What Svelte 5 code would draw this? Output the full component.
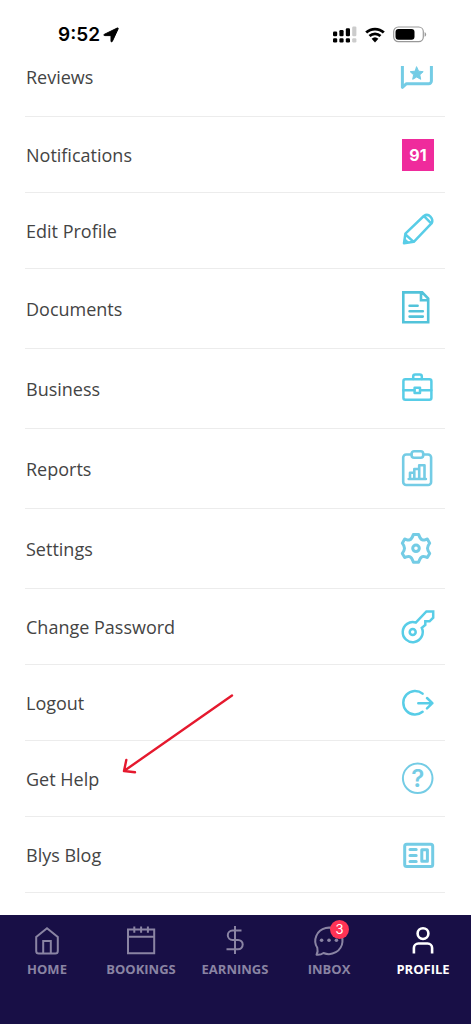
<script lang="ts">
  interface MenuItem {
    label: string;
    icon: string;
    tall?: boolean;
  }

  const items: MenuItem[] = [
    { label: 'Reviews', icon: 'reviews', tall: true },
    { label: 'Notifications', icon: 'count' },
    { label: 'Edit Profile', icon: 'pencil' },
    { label: 'Documents', icon: 'document', tall: true },
    { label: 'Business', icon: 'briefcase', tall: true },
    { label: 'Reports', icon: 'report', tall: true },
    { label: 'Settings', icon: 'gear', tall: true },
    { label: 'Change Password', icon: 'key' },
    { label: 'Logout', icon: 'logout' },
    { label: 'Get Help', icon: 'help' },
    { label: 'Blys Blog', icon: 'blog' }
  ];

  const tabs = ['Home', 'Bookings', 'Earnings', 'Inbox', 'Profile'];

  let activeTab = $state('Profile');
  let notifications = 91;
  let unread = 3;
</script>

<div class="app">
  <!-- Status bar -->
  <header class="status">
    <div class="clock">
      <span>9:52</span>
      <svg width="16" height="16" viewBox="0 0 16 16"><path d="M1.2 7.4 14.3 1q1.2-.4.8.9L9.3 14.4q-.9 1.2-1.3-.2V8.6H1.8Q0 8.2 1.2 7.4z" stroke="#000" /></svg>
    </div>
    <div class="signals">
      <svg width="24" height="17" viewBox="0 0 24 17">
        <rect x="0" y="5.5" width="4.2" height="4.7" rx="1.2" />
        <rect x="6.4" y="4" width="4.2" height="6.2" rx="1.2" />
        <rect x="12.8" y="2.2" width="4.2" height="8" rx="1.2" />
        <rect x="19.2" y="0.5" width="4.2" height="9.7" rx="1.2" fill="#ccc" />
        <rect x="0" y="12.2" width="4.2" height="4.2" rx="1.2" />
        <rect x="6.4" y="12.2" width="4.2" height="4.2" rx="1.2" />
        <rect x="12.8" y="12.2" width="4.2" height="4.2" rx="1.2" />
        <rect x="19.2" y="12.2" width="4.2" height="4.2" rx="1.2" fill="#ccc" />
      </svg>
      <svg width="20" height="16" viewBox="0 0 20 16">
        <path d="M1.2 5.6a12.7 12.7 0 0 1 17.6 0M4.5 9.1a8 8 0 0 1 11 0" fill="none" stroke="#000" stroke-width="2.8" />
        <path d="M6.6 11.8a5 5 0 0 1 6.8 0L10 15.4z" />
      </svg>
      <svg width="34" height="17" viewBox="0 0 34 17">
        <rect x="0.7" y="1" width="29.6" height="14.6" rx="4.6" fill="none" stroke="#999" stroke-width="1.2" />
        <rect x="2.5" y="2.9" width="19" height="10.8" rx="3" />
        <path d="M31.6 6v4.8q1.5-.7 1.5-2.4T31.6 6z" fill="#999" />
      </svg>
    </div>
  </header>

  <main class="content">
    <ul class="menu">
      {#each items as item (item.label)}
        <li class="row" class:tall={item.tall}>
          <a href="#{item.icon}">
            <span>{item.label}</span>
            {#if item.icon === 'count'}
              <span class="count">{notifications}</span>
            {:else}
              <svg class="icon {item.icon}" viewBox="0 0 36 39">
                {#if item.icon === 'reviews'}
                  <path d="M2.4 30.3V6a2.5 2.5 0 0 1 2.5-2.5h24A2.5 2.5 0 0 1 31.4 6v18a2.7 2.7 0 0 1-2.7 2.7H6.5z" />
                  <path class="solid" d="m16.7 10 1.9 4.2 4.6.5-3.4 3.1.9 4.5-4-2.3-4 2.3.9-4.5-3.4-3.1 4.6-.5z" />
                {:else if item.icon === 'pencil'}
                  <path d="M4 32.2 5.4 22.6 23.8 5q3.6-2.6 6.6.6t1.3 6.6L13.8 30.8zM24 5.2l7.4 7.4M5.2 23.2l8.2 7.4M4.7 28.6l3.3 3" />
                {:else if item.icon === 'document'}
                  <path d="M3.3 3.4h18.9l6 6.2v23.6H3.3zM21 4v7.2h7M9.6 16.7h8M9.6 22.2h13.2M9.6 27.6h13.2" />
                {:else if item.icon === 'briefcase'}
                  <rect x="3.4" y="10.2" width="28" height="20.6" rx="2" />
                  <path d="M13.2 10V7.6a2 2 0 0 1 2-2h4.6a2 2 0 0 1 2 2V10M3.4 21.3h10.9M20.3 21.3h11" />
                  <rect x="14.6" y="18.7" width="5.4" height="5.2" />
                {:else if item.icon === 'report'}
                  <path d="M11.4 5.5H6.2a3 3 0 0 0-3 3V33a3 3 0 0 0 3 3h21.9a3 3 0 0 0 3-3V8.5a3 3 0 0 0-3-3h-4.7" />
                  <rect x="11.6" y="2.2" width="11.6" height="6.5" rx="2.5" />
                  <path d="M8.7 30h17.2M10 30v-6.2h4.3M14.3 30V20h4.9M19.2 30V16.2h5.3V30" />
                {:else if item.icon === 'gear'}
                  <path d="M13.4 5.4h5.2c1 2.6 1.5 4.7 3.7 5.5s3.2-.5 5-.8l2.4 4.1c-1.4 1.8-2.2 3-2.2 5.1s.8 3.3 2.2 5.1l-2.4 4.1c-1.8-.3-2.8-1.6-5-.8s-2.7 2.9-3.7 5.5h-5.2c-1-2.6-1.5-4.7-3.7-5.5s-3.2.5-5 .8l-2.400-4.100c1.400-1.800 2.200-3 2.200-5.100s-.8-3.300-2.200-5.100l2.400-4.100c1.800.3 2.800 1.600 5 .8s2.700-2.900 3.700-5.500z" />
                  <circle cx="16" cy="19.3" r="3.3" />
                {:else if item.icon === 'key'}
                  <path d="M15.8 15.6 26.4 4.4h6.8v6.3l-3.6 3.6h-4.3v3.6l-3.500 3a10 10 0 1 1-6-5.300z" />
                  <circle cx="12.7" cy="25" r="3" />
                {:else if item.icon === 'logout'}
                  <path d="M22.6 10.6a11.8 11.8 0 1 0 0 18.2M18.3 20.2h14M27 15l5.4 5.2-5.4 5.2" />
                {:else if item.icon === 'help'}
                  <circle cx="17.7" cy="19.3" r="14.8" />
                  <text x="17.7" y="28" text-anchor="middle">?</text>
                {:else if item.icon === 'blog'}
                  <rect x="4.7" y="9.2" width="28" height="22.2" rx="2" />
                  <path d="M10 14.5h6.2M10 20.5h6.2M10 26.5h6.2" />
                  <rect x="21.8" y="14.8" width="5.6" height="11.4" />
                {/if}
              </svg>
            {/if}
          </a>
          {#if item.icon === 'help'}
            <svg class="pointer" viewBox="0 0 116 85">
              <path d="M112 4.5 4 80M6.3 69 4 80l11 1.3" />
            </svg>
          {/if}
        </li>
      {/each}
    </ul>
  </main>

  <!-- Tab bar -->
  <nav class="tabs">
    {#each tabs as tab}
      <button class="tab" class:active={activeTab === tab} onclick={() => (activeTab = tab)}>
        <span class="tab-icon">
          <svg width="36" height="36" viewBox="0 0 36 36">
            {#if tab === 'Home'}
              <path d="M18 5.3 28.8 14v14a2.5 2.5 0 0 1-2.5 2.5H9.7A2.5 2.5 0 0 1 7.2 28V14zM14.2 30.5V18h7.6v12.5" />
            {:else if tab === 'Bookings'}
              <path d="M5 6.5h26.2v23.7H5zM5 13.8h26M11.3 3.5v6.2M18.1 3.5v6.2M24.9 3.5v6.2" />
            {:else if tab === 'Earnings'}
              <path d="M18 3v28M24.5 7.5h-9a4.7 4.7 0 0 0 0 9.4h5.5a4.7 4.7 0 0 1 0 9.4H9.5" />
            {:else if tab === 'Inbox'}
              <path d="M6.3 24.8a13.6 13.2 0 1 1 6.2 5.2q-3 2.2-7 1.7 1.8-3 .8-6.9z" stroke-linejoin="round" />
              <g class="dots">
                <circle cx="10.6" cy="17.2" r="1.8" />
                <circle cx="18" cy="17.2" r="1.8" />
                <circle cx="25.4" cy="17.2" r="1.8" />
              </g>
            {:else}
              <circle cx="18" cy="10.6" r="5.4" />
              <path d="M8.9 30.5V25a4.500 4.500 0 0 1 4.500-4.500h9.200a4.500 4.500 0 0 1 4.500 4.500v5.500" />
            {/if}
          </svg>
          {#if tab === 'Inbox'}
            <span class="badge">{unread}</span>
          {/if}
        </span>
        <span>{tab}</span>
      </button>
    {/each}
  </nav>
</div>

<style>
  :global(body) {
    background: #fff;
  }

  .app {
    display: flex;
    flex-direction: column;
    min-height: 100vh;
    font-family: 'Open Sans', sans-serif;
  }

  .status {
    display: flex;
    justify-content: space-between;
    align-items: center;
    height: 66px;
    padding: 3px 44px 0 58px;
    box-sizing: border-box;
  }

  .clock {
    display: flex;
    align-items: center;
    gap: 3px;
    font-family: Inter, sans-serif;
    font-size: 19px;
    font-weight: 600;
    line-height: 24px;
  }

  .signals {
    display: flex;
    align-items: center;
    gap: 8px;
  }

  .content {
    flex: 1;
    overflow: hidden;
  }

  /* list is scrolled a little under the status bar */
  .menu {
    list-style: none;
    margin: -29px 26px 0 25px;
    padding: 0;
  }

  .row {
    position: relative;
    height: 76px;
    box-sizing: border-box;
    border-bottom: 1px solid #ececec;
  }

  .row.tall {
    height: 80px;
  }

  .row a {
    display: flex;
    justify-content: space-between;
    align-items: center;
    height: 100%;
    padding: 0 9px 0 1px;
    color: #444;
    font-size: 18px;
    line-height: 18px;
    text-decoration: none;
  }

  .icon {
    width: 36px;
    height: 39px;
    fill: none;
    stroke: #74cce5;
    stroke-width: 2.6;
    stroke-linejoin: round;
    stroke-linecap: round;
  }

  .icon .solid {
    fill: #74cce5;
    stroke-width: 1;
  }

  .icon text {
    fill: #74cce5;
    stroke: none;
    font-family: Inter, sans-serif;
    font-size: 24px;
    font-weight: 600;
  }

  .icon.pencil,
  .icon.briefcase,
  .icon.key,
  .icon.logout {
    stroke: #58cde7;
    stroke-width: 2.5;
  }

  .icon.document {
    stroke: #52c3da;
  }

  .icon.key,
  .icon.document {
    stroke-linejoin: miter;
  }

  .icon.gear,
  .icon.reviews,
  .icon.blog {
    stroke-width: 3;
  }

  .icon.help {
    stroke-width: 2;
  }

  .count {
    width: 32px;
    margin-right: 2px;
    background: #ef2b9c;
    color: #fff;
    font-family: Inter, sans-serif;
    font-size: 16px;
    font-weight: 700;
    line-height: 32px;
    text-align: center;
  }

  .pointer {
    position: absolute;
    left: 95px;
    top: -50px;
    width: 116px;
    height: 85px;
    fill: none;
    stroke: #e5192e;
    stroke-width: 2.4;
    stroke-linecap: round;
    stroke-linejoin: round;
    pointer-events: none;
  }

  .tabs {
    display: flex;
    padding: 8px 1px 45px 0;
    background: #180f46;
  }

  .tab {
    flex: 1 1 0;
    display: flex;
    flex-direction: column;
    align-items: center;
    padding: 0;
    border: 0;
    background: none;
    color: #8a84a3;
    font-family: inherit;
    font-size: 13px;
    font-weight: 700;
    line-height: 20px;
    text-transform: uppercase;
    cursor: pointer;
  }

  .tab.active {
    color: #fff;
  }

  .tab-icon {
    position: relative;
    height: 36px;
  }

  .tab svg {
    fill: none;
    stroke: currentColor;
    stroke-width: 2;
  }

  .tab.active svg {
    stroke-width: 2.6;
  }

  .tab .dots {
    fill: currentColor;
    stroke: none;
  }

  .badge {
    position: absolute;
    top: -3px;
    right: -2px;
    width: 19px;
    border-radius: 50%;
    background: #ff3355;
    color: #fff;
    font-family: Inter, sans-serif;
    font-size: 13px;
    font-weight: 400;
    line-height: 19px;
    text-align: center;
  }
</style>
